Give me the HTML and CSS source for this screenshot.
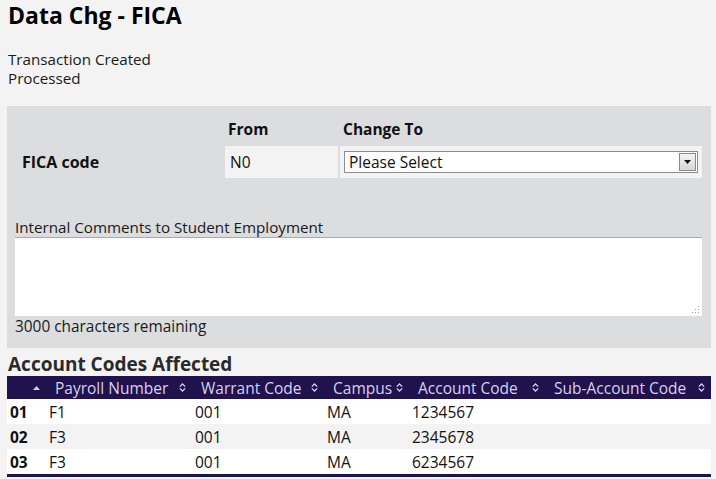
FILE: index.html
```html
<!DOCTYPE html>
<html>
<head>
<meta charset="utf-8">
<link rel="stylesheet" href="styles.css">
</head>
<body>
<h1 class="title">Data Chg - FICA</h1>
<div class="status">
  <div>Transaction Created</div>
  <div>Processed</div>
</div>
<section class="panel">
  <div class="grid">
    <div></div>
    <div class="colhead">From</div>
    <div class="colhead">Change To</div>
    <div class="rowlabel">FICA code</div>
    <div class="fromcell">N0</div>
    <div class="tocell">
      <div class="select">
        <span class="select-text">Please Select</span>
        <span class="select-btn"><svg width="7" height="4" viewBox="0 0 7 4"><path d="M0 0h7L3.5 4z" fill="#111"/></svg></span>
      </div>
    </div>
  </div>
  <div class="comments">
    <div class="comments-label">Internal Comments to Student Employment</div>
    <div class="textarea"><svg class="grip" width="7" height="7" viewBox="0 0 7 7"><g fill="#9a9a9a"><rect x="6" y="0" width="1" height="1"/><rect x="3" y="3" width="1" height="1"/><rect x="6" y="3" width="1" height="1"/><rect x="0" y="6" width="1" height="1"/><rect x="3" y="6" width="1" height="1"/><rect x="6" y="6" width="1" height="1"/></g></svg></div>
    <div class="remaining">3000 characters remaining</div>
  </div>
</section>
<h2 class="subtitle">Account Codes Affected</h2>
<table class="codes">
  <colgroup>
    <col class="c0"><col class="c1"><col class="c2"><col class="c3"><col class="c4"><col class="c5">
  </colgroup>
  <thead>
    <tr>
      <th><span class="th-inner"><span></span><svg class="up" width="7" height="4" viewBox="0 0 7 4"><path d="M0 4L3.5 0 7 4z" fill="#d8d0ee"/></svg></span></th>
      <th><span class="th-inner"><span>Payroll Number</span><svg class="sort" width="7" height="9" viewBox="0 0 7 9"><path d="M0.8 3.6L3.5 1 6.2 3.6M0.8 5.4L3.5 8 6.2 5.4" stroke="#d8d0ee" stroke-width="1.3" fill="none"/></svg></span></th>
      <th><span class="th-inner"><span>Warrant Code</span><svg class="sort" width="7" height="9" viewBox="0 0 7 9"><path d="M0.8 3.6L3.5 1 6.2 3.6M0.8 5.4L3.5 8 6.2 5.4" stroke="#d8d0ee" stroke-width="1.3" fill="none"/></svg></span></th>
      <th><span class="th-inner"><span>Campus</span><svg class="sort" width="7" height="9" viewBox="0 0 7 9"><path d="M0.8 3.6L3.5 1 6.2 3.6M0.8 5.4L3.5 8 6.2 5.4" stroke="#d8d0ee" stroke-width="1.3" fill="none"/></svg></span></th>
      <th><span class="th-inner"><span>Account Code</span><svg class="sort" width="7" height="9" viewBox="0 0 7 9"><path d="M0.8 3.6L3.5 1 6.2 3.6M0.8 5.4L3.5 8 6.2 5.4" stroke="#d8d0ee" stroke-width="1.3" fill="none"/></svg></span></th>
      <th><span class="th-inner"><span>Sub-Account Code</span><svg class="sort" width="7" height="9" viewBox="0 0 7 9"><path d="M0.8 3.6L3.5 1 6.2 3.6M0.8 5.4L3.5 8 6.2 5.4" stroke="#d8d0ee" stroke-width="1.3" fill="none"/></svg></span></th>
    </tr>
  </thead>
  <tbody>
    <tr><td class="num">01</td><td>F1</td><td>001</td><td>MA</td><td>1234567</td><td></td></tr>
    <tr class="alt"><td class="num">02</td><td>F3</td><td>001</td><td>MA</td><td>2345678</td><td></td></tr>
    <tr><td class="num">03</td><td>F3</td><td>001</td><td>MA</td><td>6234567</td><td></td></tr>
  </tbody>
</table>
</body>
</html>
```

FILE: styles.css
```css
html, body {
  margin: 0;
  padding: 0;
  background: #f3f3f3;
  color: #111;
  font-family: "Open Sans", "DejaVu Sans", sans-serif;
}
body {
  padding: 0 5px 0 7px;
}
.title {
  margin: 0;
  padding: 0 0 0 1px;
  font-size: 23px;
  font-weight: 700;
  line-height: 30px;
  color: #000;
}
.status {
  margin-top: 20px;
  padding-left: 1px;
  font-size: 15.2px;
  line-height: 19px;
  color: #1a1a1a;
}
.panel {
  margin-top: 18px;
  width: 704px;
  background: #dcdddf;
  padding: 13px 0 11px 0;
  box-sizing: border-box;
}
.grid {
  display: grid;
  grid-template-columns: 216px 113px 362px;
  column-gap: 2px;
  grid-template-rows: 27px 32px;
}
.colhead {
  font-weight: 700;
  font-size: 15.5px;
  line-height: 20px;
  padding-left: 3px;
  color: #111;
}
.rowlabel {
  font-weight: 700;
  font-size: 16px;
  padding-left: 15px;
  display: flex;
  align-items: center;
  color: #111;
}
.fromcell {
  background: #f3f3f3;
  font-size: 15.5px;
  display: flex;
  align-items: center;
  padding-left: 5px;
  color: #111;
}
.tocell {
  background: #f3f3f3;
  display: flex;
  align-items: center;
  padding: 0 4px 0 4px;
}
.select {
  flex: 1;
  height: 22px;
  display: flex;
  align-items: stretch;
  background: #fff;
  border: 1px solid #8d8d8d;
  box-sizing: border-box;
}
.select-text {
  flex: 1;
  font-size: 15.5px;
  line-height: 20px;
  padding-left: 4px;
  color: #111;
}
.select-btn {
  width: 15px;
  margin: 1px;
  border: 1px solid #8a8a8a;
  background: linear-gradient(#f4f4f4, #d6d6d6);
  display: flex;
  align-items: center;
  justify-content: center;
}
.comments {
  margin-top: 39px;
  padding: 0 9px 0 8px;
}
.comments-label {
  font-size: 15.2px;
  line-height: 20px;
  color: #1a1a1a;
}
.textarea {
  height: 79px;
  background: #fff;
  border-top: 1px solid #a9a9a9;
  box-sizing: border-box;
  display: flex;
  justify-content: flex-end;
  align-items: flex-end;
  padding: 0 3px 3px 0;
}
.remaining {
  font-size: 15.4px;
  line-height: 20px;
  margin-top: 1px;
  color: #1a1a1a;
}
.subtitle {
  margin: 5px 0 0 0;
  padding-left: 1px;
  font-size: 19px;
  line-height: 23px;
  font-weight: 700;
  color: #2a2a2a;
}
.codes {
  width: 704px;
  border-collapse: collapse;
  table-layout: fixed;
  font-size: 15.5px;
  border-bottom: 3px solid #20124d;
}
.c0 { width: 39px; }
.c1 { width: 146px; }
.c2 { width: 132px; }
.c3 { width: 85px; }
.c4 { width: 136px; }
.c5 { width: 166px; }
.codes th {
  background: #20124d;
  color: #d8d0ee;
  font-weight: 400;
  height: 23px;
  padding: 0 6px 0 9px;
  text-align: left;
}
.th-inner {
  display: flex;
  justify-content: space-between;
  align-items: center;
  white-space: nowrap;
}
.codes td {
  height: 25px;
  padding: 0 0 0 3px;
  background: #fff;
  color: #111;
}
.codes tr.alt td {
  background: #f3f3f3;
}
.codes td.num {
  font-weight: 700;
  padding-left: 3px;
}
```
